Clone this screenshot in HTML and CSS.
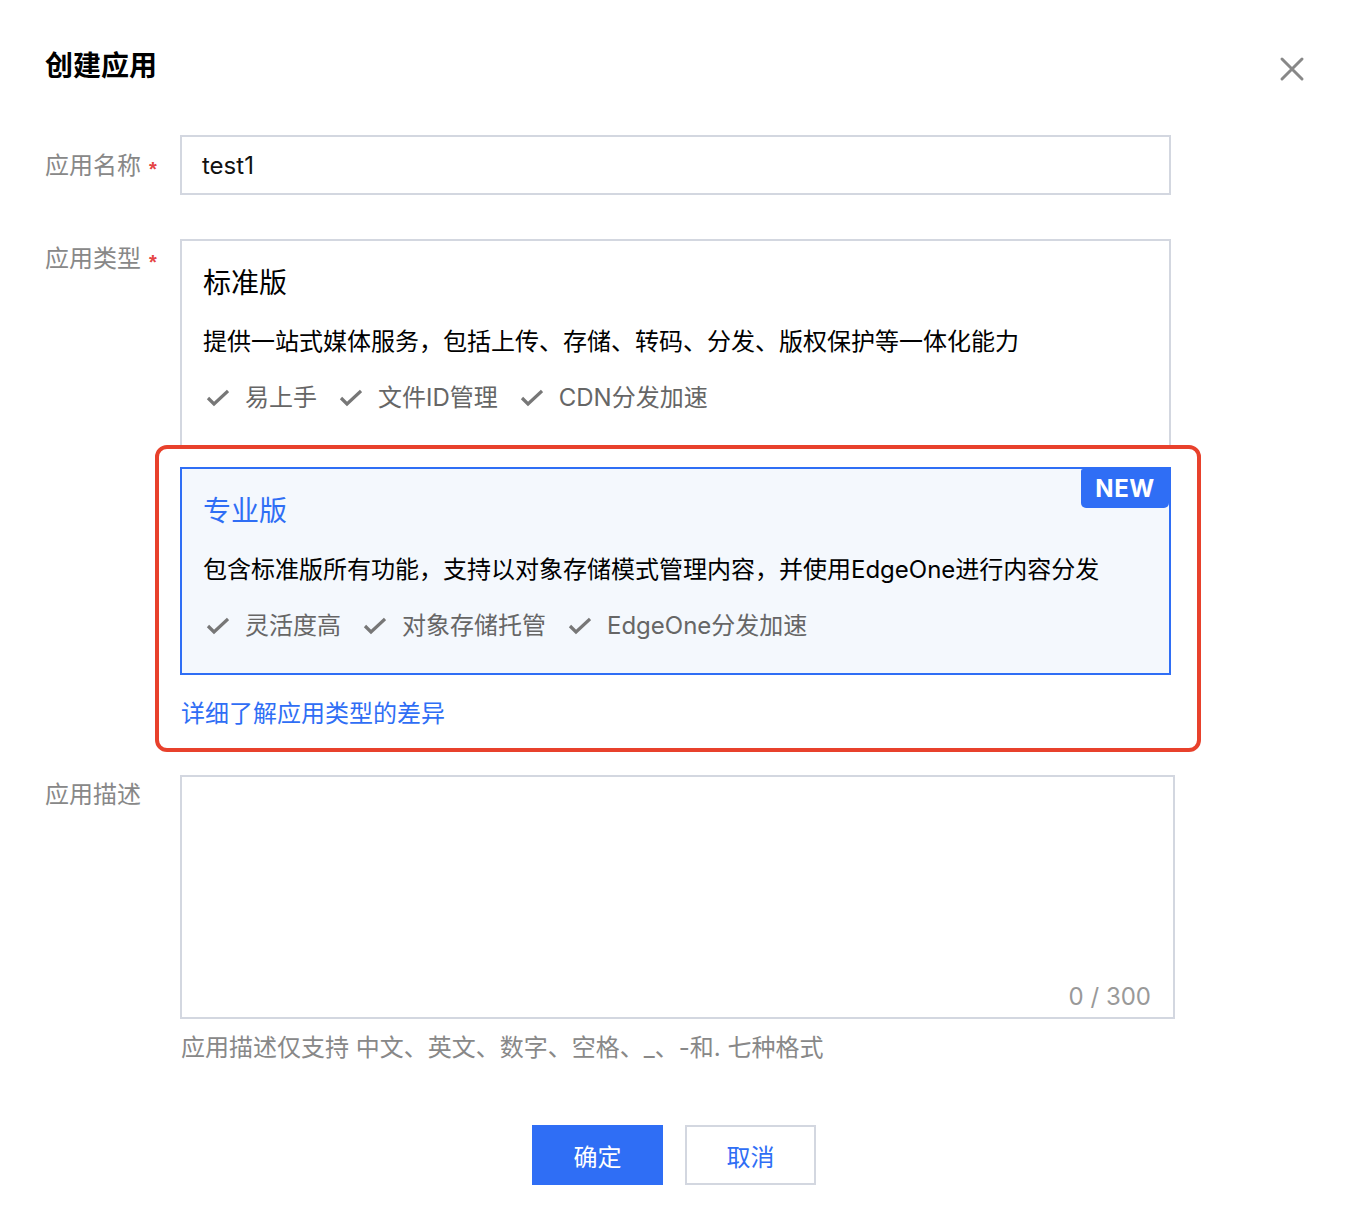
FILE: index.html
```html
<!DOCTYPE html>
<html lang="zh">
<head>
<meta charset="utf-8">
<title>创建应用</title>
<link rel="stylesheet" href="styles.css">
</head>
<body>
<div class="dialog">
  <div class="header">
    <h1 class="title">创建应用</h1>
    <button class="close" aria-label="关闭">
      <svg width="26" height="26" viewBox="0 0 26 26"><path d="M3 3 L23 23 M23 3 L3 23" stroke="#888" stroke-width="3" stroke-linecap="round" fill="none"/></svg>
    </button>
  </div>

  <div class="row row-name">
    <div class="label">应用名称<span class="req">*</span></div>
    <div class="field">
      <div class="input">test1</div>
    </div>
  </div>

  <div class="row row-type">
    <div class="label label-top">应用类型<span class="req">*</span></div>
    <div class="field field-type">
      <div class="card">
        <div class="card-title">标准版</div>
        <div class="card-desc">提供一站式媒体服务，包括上传、存储、转码、分发、版权保护等一体化能力</div>
        <div class="features">
          <span class="feat"><svg class="chk" width="26" height="22" viewBox="0 0 26 22"><path d="M5 11 L11 17 L25 4" stroke="#777" stroke-width="3.2" fill="none"/></svg>易上手</span>
          <span class="feat"><svg class="chk" width="26" height="22" viewBox="0 0 26 22"><path d="M5 11 L11 17 L25 4" stroke="#777" stroke-width="3.2" fill="none"/></svg>文件ID管理</span>
          <span class="feat"><svg class="chk" width="26" height="22" viewBox="0 0 26 22"><path d="M5 11 L11 17 L25 4" stroke="#777" stroke-width="3.2" fill="none"/></svg>CDN分发加速</span>
        </div>
      </div>
      <div class="card card-active">
        <span class="badge">NEW</span>
        <div class="card-title blue">专业版</div>
        <div class="card-desc">包含标准版所有功能，支持以对象存储模式管理内容，并使用EdgeOne进行内容分发</div>
        <div class="features">
          <span class="feat"><svg class="chk" width="26" height="22" viewBox="0 0 26 22"><path d="M5 11 L11 17 L25 4" stroke="#777" stroke-width="3.2" fill="none"/></svg>灵活度高</span>
          <span class="feat"><svg class="chk" width="26" height="22" viewBox="0 0 26 22"><path d="M5 11 L11 17 L25 4" stroke="#777" stroke-width="3.2" fill="none"/></svg>对象存储托管</span>
          <span class="feat"><svg class="chk" width="26" height="22" viewBox="0 0 26 22"><path d="M5 11 L11 17 L25 4" stroke="#777" stroke-width="3.2" fill="none"/></svg>EdgeOne分发加速</span>
        </div>
      </div>
      <a class="link" href="#">详细了解应用类型的差异</a>
      <div class="highlight"></div>
    </div>
  </div>

  <div class="row row-desc">
    <div class="label label-top">应用描述</div>
    <div class="field">
      <div class="textarea"><span class="counter">0 / 300</span></div>
      <div class="help">应用描述仅支持 中文、英文、数字、空格、_、-和. 七种格式</div>
    </div>
  </div>

  <div class="actions">
    <button class="btn btn-primary">确定</button>
    <button class="btn btn-default">取消</button>
  </div>
</div>
</body>
</html>
```

FILE: styles.css
```css
* { box-sizing: border-box; }
html, body { margin: 0; padding: 0; background: #fff; }
body {
  font-family: Inter, "Noto Sans CJK SC", "Noto Sans", sans-serif;
  font-size: 24px;
  color: #000;
}
.dialog {
  width: 1348px;
  padding: 47px 0 0 45px;
  position: relative;
}
.header {
  display: flex;
  justify-content: space-between;
  align-items: center;
  height: 38px;
  padding-right: 43px;
}
.title {
  margin: 0;
  font-size: 28px;
  line-height: 38px;
  font-weight: 700;
  color: #000;
}
.close {
  border: 0;
  background: none;
  padding: 0;
  width: 26px;
  height: 26px;
  margin-top: 6px;
  display: flex;
}
.row {
  display: flex;
}
.row-name {
  margin-top: 50px;
  align-items: center;
}
.row-type { margin-top: 44px; }
.row-desc { margin-top: 45px; }
.label {
  width: 135px;
  flex: none;
  color: #888;
  line-height: 30px;
  display: flex;
  align-items: center;
  padding-top: 1px;
}
.label-top { padding-top: 5px; align-self: flex-start; }
.req {
  color: #e54545;
  font-family: "Liberation Sans", sans-serif;
  font-size: 20px;
  font-weight: 700;
  margin-left: 8px;
  line-height: 20px;
  padding-top: 6px;
}
.field { width: 995px; position: relative; }
.input {
  width: 991px;
  height: 60px;
  border: 2px solid #d3d7e0;
  padding: 1px 20px 0;
  line-height: 56px;
  color: #111;
}
.card {
  width: 991px;
  height: 208px;
  border: 2px solid #d3d7e0;
  padding: 23px 21px 0;
  position: relative;
  background: #fff;
}
.card-active {
  margin-top: 20px;
  border-color: #2f6ef5;
  background: #f4f8fd;
}
.card-title {
  font-size: 28px;
  line-height: 38px;
  color: #000;
}
.card-title.blue { color: #2f6ef5; }
.card-desc {
  margin-top: 25px;
  line-height: 30px;
  color: #000;
}
.features {
  margin-top: 26px;
  display: flex;
  gap: 19px;
  line-height: 30px;
  color: #666;
}
.feat {
  display: flex;
  align-items: center;
}
.chk { flex: none; margin-right: 16px; }
.badge {
  position: absolute;
  top: 0;
  right: 0;
  width: 88px;
  height: 39px;
  background: #2f6ef5;
  color: #fff;
  font-weight: 700;
  font-size: 24px;
  line-height: 39px;
  text-align: center;
  border-radius: 2px 0 5px 5px;
  letter-spacing: 0.5px;
}
.link {
  display: block;
  margin-top: 23px;
  line-height: 32px;
  color: #2f6ef5;
  text-decoration: none;
  padding-left: 1px;
}
.highlight {
  position: absolute;
  left: -25px;
  top: 206px;
  width: 1046px;
  height: 307px;
  border: 4px solid #e8412c;
  border-radius: 12px;
  pointer-events: none;
}
.textarea {
  width: 995px;
  height: 244px;
  border: 2px solid #d3d7e0;
  position: relative;
}
.counter {
  position: absolute;
  right: 22px;
  bottom: 5px;
  line-height: 30px;
  color: #999;
}
.help {
  margin-top: 13px;
  line-height: 32px;
  color: #888;
  padding-left: 1px;
}
.actions {
  display: flex;
  justify-content: center;
  gap: 22px;
  margin-top: 61px;
  margin-left: -45px;
}
.btn {
  width: 131px;
  height: 60px;
  font-family: inherit;
  font-size: 24px;
  padding: 0;
  cursor: pointer;
}
.btn-primary {
  background: #2f6ef5;
  color: #fff;
  border: 0;
}
.btn-default {
  background: #fff;
  color: #2f6ef5;
  border: 2px solid #d3d7e0;
}
```
